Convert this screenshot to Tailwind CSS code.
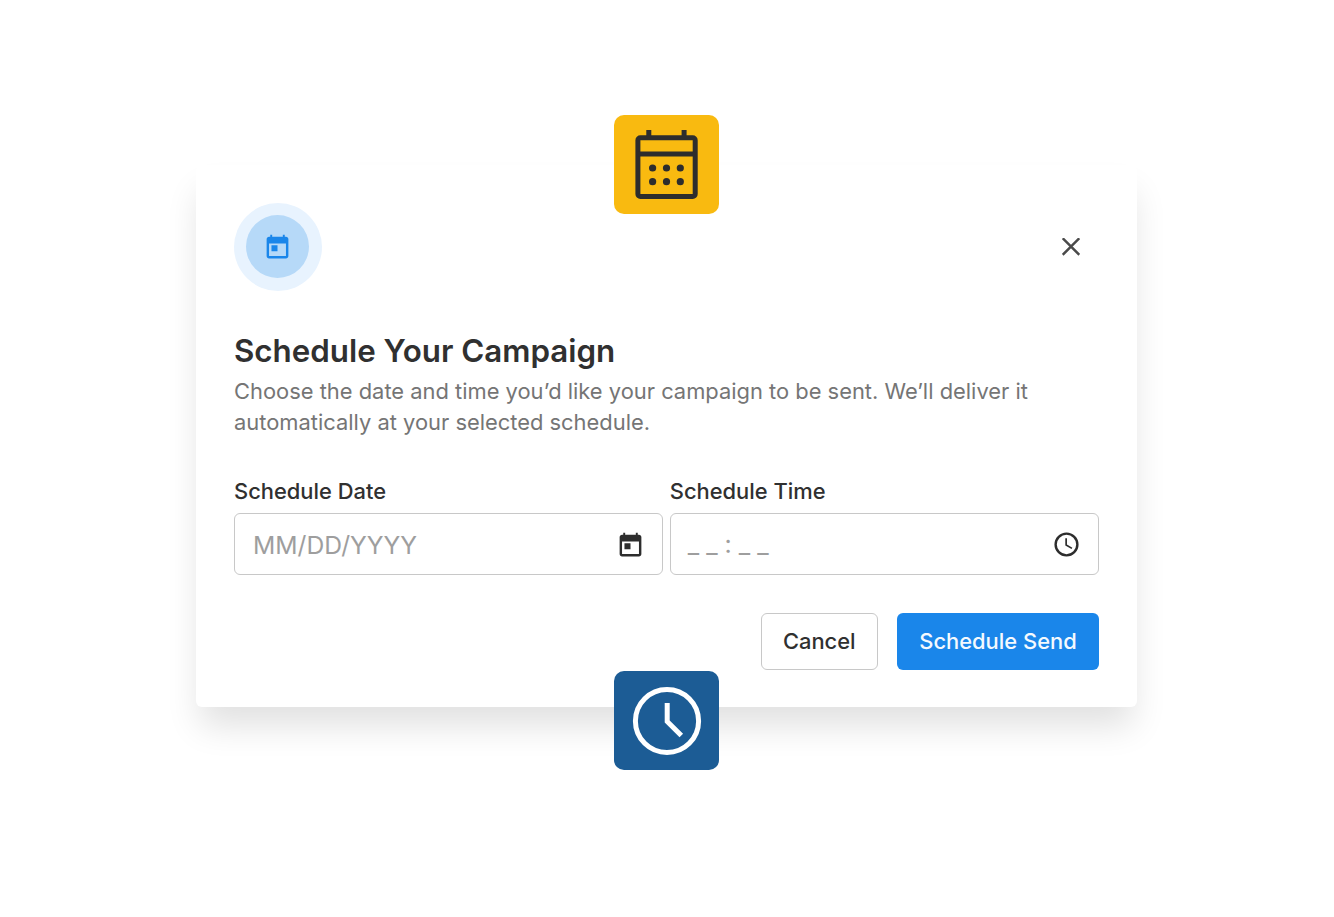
<!DOCTYPE html>
<html lang="en">
<head>
  <meta charset="UTF-8" />
  <meta name="viewport" content="width=device-width, initial-scale=1.0" />
  <title>Schedule Your Campaign</title>
  <script src="https://cdn.jsdelivr.net/npm/@tailwindcss/browser@4"></script>
</head>
<body class="bg-white font-['Inter',sans-serif] text-[#303030]">

  <main class="flex justify-center h-[917px] pt-[165px] pr-px overflow-hidden">
    <div class="relative w-[941px] h-[542px] px-[38px] pt-[38px] bg-white rounded-md shadow-[0_23px_34px_-4px_rgba(0,0,0,0.12)]">

      <!-- Calendar badge -->
      <div class="absolute -top-[50px] left-[418px] w-[105px] h-[99px] rounded-[10px] bg-[#f9ba10]">
        <svg class="w-[105px] h-[99px]" viewBox="0 0 105 99" fill="none" stroke="#2d2d2d" stroke-width="5">
          <rect x="23.9" y="22.7" width="57.3" height="58.8" rx="2.5" />
          <path d="M24 39H81M34.8 15v7M70.1 15v7" />
          <g fill="#2d2d2d" stroke="none">
            <circle cx="38.6" cy="53" r="3.6" /><circle cx="52.5" cy="53" r="3.6" /><circle cx="66.3" cy="53" r="3.6" />
            <circle cx="38.6" cy="66.7" r="3.6" /><circle cx="52.5" cy="66.7" r="3.6" /><circle cx="66.3" cy="66.7" r="3.6" />
          </g>
        </svg>
      </div>

      <!-- Header -->
      <div class="flex items-center justify-between">
        <div class="flex items-center justify-center w-[87.5px] h-[87.5px] rounded-full bg-[#e8f3fe]">
          <div class="flex items-center justify-center w-[63px] h-[63px] rounded-full bg-[#b6d9f8]">
            <svg class="mt-[2px] w-[29px] h-[29px]" viewBox="0 0 24 24" fill="#1a86ea">
              <path d="M19 3h-1V1.4h-1.6V3H7.6V1.4H6V3H5c-1.11 0-1.99.9-1.99 2L3 19c0 1.1.89 2 2 2h14c1.1 0 2-.9 2-2V5c0-1.1-.9-2-2-2zm0 16H5V8.7h14V19zM7 10.2h5v5H7z" />
            </svg>
          </div>
        </div>
        <button class="mr-[19px]" aria-label="Close">
          <svg class="w-[18px] h-[18px]" viewBox="0 0 18 18" fill="none" stroke="#4a4a4a" stroke-width="2.4">
            <path d="M.7.2l16.6 16.6M17.3.2L.7 16.8" />
          </svg>
        </button>
      </div>

      <h1 class="mt-[38.5px] text-[31.3px] leading-[44px] font-semibold">Schedule Your Campaign</h1>
      <p class="mt-[2.5px] text-[21.9px] leading-[31.3px] text-[#757575] whitespace-nowrap">Choose the date and time you’d like your campaign to be sent. We’ll deliver it<br />automatically at your selected schedule.</p>

      <!-- Date and time -->
      <div class="mt-[38px] flex gap-[6.5px]">
        <div class="flex-1">
          <label class="block text-[21.9px] leading-[31px] font-medium">Schedule Date</label>
          <div class="mt-[6px] flex items-center justify-between h-[62px] pl-[18px] pr-[17px] border border-[#c8c8c8] rounded-md">
            <span class="pt-[2px] text-[24.7px] text-[#9e9e9e]">MM/DD/YYYY</span>
            <svg class="mt-[2px] w-[29px] h-[29px]" viewBox="0 0 24 24" fill="#2d2d2d">
              <path d="M19 3h-1V1.4h-1.6V3H7.6V1.4H6V3H5c-1.11 0-1.99.9-1.99 2L3 19c0 1.1.89 2 2 2h14c1.1 0 2-.9 2-2V5c0-1.1-.9-2-2-2zm0 16H5V8.7h14V19zM7 10.2h5v5H7z" />
            </svg>
          </div>
        </div>
        <div class="flex-1">
          <label class="block text-[21.9px] leading-[31px] font-medium">Schedule Time</label>
          <div class="mt-[6px] flex items-center justify-between h-[62px] px-[17px] border border-[#c8c8c8] rounded-md">
            <span class="pt-px text-[25px] text-[#9e9e9e]">_ _ : _ _</span>
            <svg class="w-[29px] h-[29px]" viewBox="0 0 24 24" fill="none" stroke="#2d2d2d">
              <circle cx="12" cy="12" r="9" stroke-width="2" />
              <path d="M11.7 6.8v5.6l4.8 2.8" stroke-width="1.4" />
            </svg>
          </div>
        </div>
      </div>

      <!-- Actions -->
      <div class="mt-[38px] flex justify-end gap-[19px]">
        <button class="w-[117.5px] h-[57px] border border-[#c8c8c8] rounded-md text-[21.9px] font-medium">Cancel</button>
        <button class="w-[202px] h-[57px] rounded-md bg-[#1a86ea] text-[#f4f9fe] text-[21.9px] font-medium">Schedule Send</button>
      </div>

      <!-- Clock badge -->
      <div class="absolute top-[506px] left-[418px] w-[105px] h-[99px] rounded-[10px] bg-[#1c5c95]">
        <svg class="w-[105px] h-[99px]" viewBox="0 0 105 99" fill="none" stroke="#fff" stroke-width="5">
          <circle cx="53" cy="50" r="31.6" />
          <path d="M53.2 32v18.5L67.3 64.6" />
        </svg>
      </div>
    </div>
  </main>

</body>
</html>
